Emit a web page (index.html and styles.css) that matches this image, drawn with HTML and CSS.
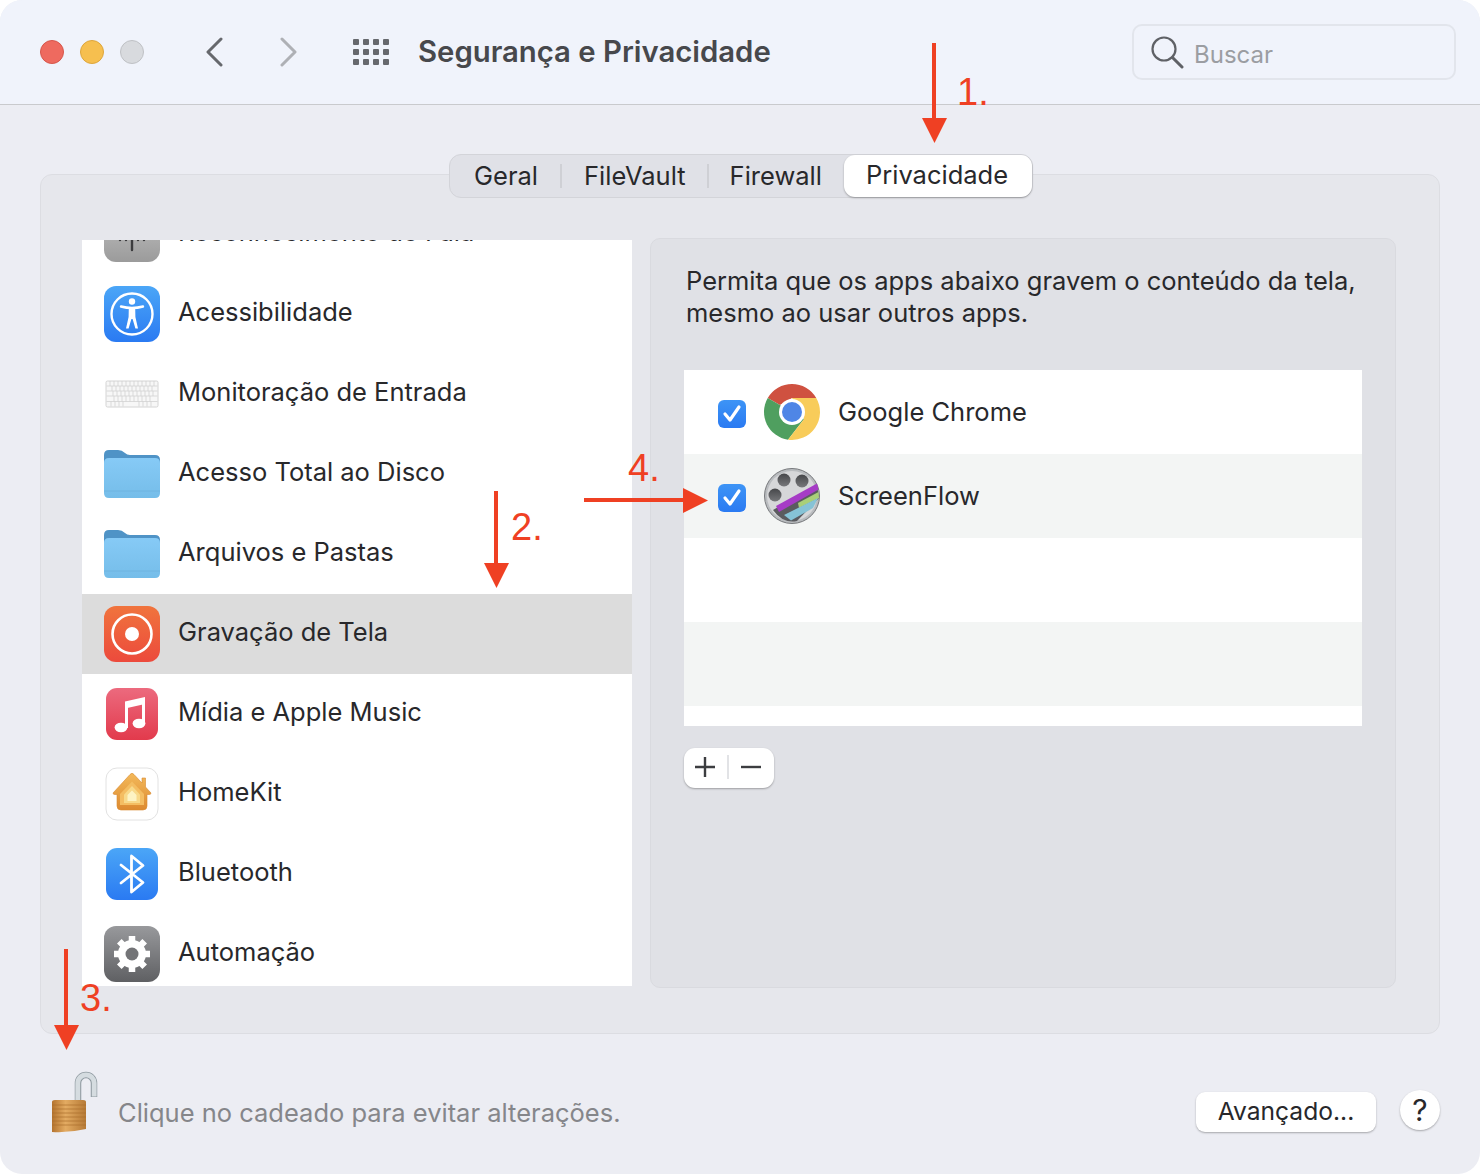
FILE: index.html
```html
<!DOCTYPE html>
<html lang="pt-br">
	<head>
		<meta http-equiv="Content-Type" content="text/html; charset=utf-8" />
		<title>Segurança e Privacidade</title>
		<link rel="stylesheet" href="styles.css">
	</head>

	<body>
		<svg class="defs" width="0" height="0">
			<defs>
				<linearGradient id="gBlue" x1="0" y1="0" x2="0" y2="1"><stop offset="0" stop-color="#4ba6f7"/><stop offset="1" stop-color="#2a7af2"/></linearGradient>
				<linearGradient id="gOrange" x1="0" y1="0" x2="0" y2="1"><stop offset="0" stop-color="#f0743d"/><stop offset="1" stop-color="#ec4a3c"/></linearGradient>
				<linearGradient id="gPink" x1="0" y1="0" x2="0" y2="1"><stop offset="0" stop-color="#ec6a7e"/><stop offset="1" stop-color="#e23a4c"/></linearGradient>
				<linearGradient id="gGray" x1="0" y1="0" x2="0" y2="1"><stop offset="0" stop-color="#98999c"/><stop offset="1" stop-color="#5f6063"/></linearGradient>
				<linearGradient id="gMic" x1="0" y1="0" x2="0" y2="1"><stop offset="0" stop-color="#c4c4c4"/><stop offset="1" stop-color="#9b9b9b"/></linearGradient>
				<linearGradient id="gFolder" x1="0" y1="0" x2="0" y2="1"><stop offset="0" stop-color="#86caf6"/><stop offset="1" stop-color="#75bde9"/></linearGradient>
				<linearGradient id="gHouse" x1="0" y1="0" x2="0" y2="1"><stop offset="0" stop-color="#f3b95a"/><stop offset="1" stop-color="#dd8a30"/></linearGradient>
				<linearGradient id="gBrass" x1="0" y1="0" x2="1" y2="0"><stop offset="0" stop-color="#b4742f"/><stop offset=".4" stop-color="#e3ab62"/><stop offset="1" stop-color="#b67a36"/></linearGradient>
				<linearGradient id="gReel" x1="0" y1="0" x2="0" y2="1"><stop offset="0" stop-color="#46474a"/><stop offset="1" stop-color="#77787b"/></linearGradient>
				<symbol id="folder" viewBox="0 0 56 48">
					<path d="M0 5q0-5 5-5h9q4 0 7 3q2 2 5 2h25q5 0 5 5v32H0z" fill="#4f93c6"/>
					<path d="M0 13q0-5 5-5h46q5 0 5 5v30q0 5-5 5H5q-5 0-5-5z" fill="url(#gFolder)"/>
					<path d="M0 41h56" stroke="#6fb4e0" stroke-width="1" fill="none"/>
				</symbol>
			</defs>
		</svg>

		<div class="window">
			<header class="toolbar">
				<div class="lights">
					<span class="light light-red"></span>
					<span class="light light-yellow"></span>
					<span class="light light-gray"></span>
				</div>
				<div class="nav">
					<svg class="chev" width="18" height="30" viewBox="0 0 18 30"><path d="M16 2L3 15l13 13" fill="none" stroke="#66686d" stroke-width="3" stroke-linecap="round" stroke-linejoin="round"/></svg>
					<svg class="chev" width="18" height="30" viewBox="0 0 18 30"><path d="M2 2l13 13L2 28" fill="none" stroke="#aeb0b5" stroke-width="3" stroke-linecap="round" stroke-linejoin="round"/></svg>
				</div>
				<div class="apps">
					<i></i><i></i><i></i><i></i><i></i><i></i><i></i><i></i><i></i><i></i><i></i><i></i>
				</div>
				<h1 class="title">Segurança e Privacidade</h1>
				<div class="search">
					<svg width="34" height="34" viewBox="0 0 34 34"><circle cx="14" cy="14" r="11.5" fill="none" stroke="#5f6166" stroke-width="2.2"/><path d="M22.5 22.5L32 32" stroke="#5f6166" stroke-width="3" stroke-linecap="round"/></svg>
					<span>Buscar</span>
				</div>
			</header>

			<nav class="tabs">
				<span class="tab">Geral</span>
				<span class="tab-sep"></span>
				<span class="tab">FileVault</span>
				<span class="tab-sep tab-sep-2"></span>
				<span class="tab">Firewall</span>
				<span class="tab tab-on">Privacidade</span>
			</nav>

			<section class="pane">
				<ul class="list">
					<li class="row">
						<svg class="ico" viewBox="0 0 56 56"><rect width="56" height="56" rx="12" fill="url(#gMic)"/><path d="M16 24v10M22 22v12M28 20v24M34 24v10M40 22v12" stroke="#3c3c3e" stroke-width="2.4" stroke-linecap="round"/></svg>
						<span>Reconhecimento de Fala</span>
					</li>
					<li class="row">
						<svg class="ico" viewBox="0 0 56 56"><rect width="56" height="56" rx="12" fill="url(#gBlue)"/><circle cx="28" cy="28" r="20.500" fill="none" stroke="#fff" stroke-width="2.400"/><circle cx="28" cy="15.500" r="3.200" fill="#fff"/><path d="M17 20.500Q28 23.500 39 20.500" fill="none" stroke="#fff" stroke-width="2.400" stroke-linecap="round"/><path d="M24.800 22h6.400l.2 9 2.600 11.500h-2.600L28.600 33h-1.200l-2.800 9.500H22l2.600-11.500z" fill="#fff"/></svg>
						<span>Acessibilidade</span>
					</li>
					<li class="row">
						<svg class="ico" viewBox="0 0 56 56">
							<rect x="2" y="15" width="52" height="26" rx="1.500" fill="#f7f7f7" stroke="#d4d4d4"/>
							<path d="M2.500 20h51M2.500 25h51M2.500 30h51M2.500 35.500h51" stroke="#d2d2d2" stroke-width=".8"/>
							<path d="M6 15v5M10 15v5M14 15v5M18 15v5M22 15v5M26 15v5M30 15v5M34 15v5M38 15v5M42 15v5M46 15v5M50 15v5M8 20v5M12 20v5M16 20v5M20 20v5M24 20v5M28 20v5M32 20v5M36 20v5M40 20v5M44 20v5M48 20v5M9 25v5M13 25v5M17 25v5M21 25v5M25 25v5M29 25v5M33 25v5M37 25v5M41 25v5M45 25v5M49 25v5M10 30v5.500M14 30v5.500M18 30v5.500M22 30v5.500M26 30v5.500M30 30v5.500M34 30v5.500M38 30v5.500M42 30v5.500M46 30v5.500M7 35.500v5M11 35.500v5M15 35.500v5M19 35.500v5M35 35.500v5M39 35.500v5M43 35.500v5M47 35.500v5" stroke="#d2d2d2" stroke-width=".8"/>
						</svg>
						<span>Monitoração de Entrada</span>
					</li>
					<li class="row">
						<svg class="ico ico-folder" viewBox="0 0 56 48"><use href="#folder"/></svg>
						<span>Acesso Total ao Disco</span>
					</li>
					<li class="row">
						<svg class="ico ico-folder" viewBox="0 0 56 48"><use href="#folder"/></svg>
						<span>Arquivos e Pastas</span>
					</li>
					<li class="row row-on">
						<svg class="ico" viewBox="0 0 56 56"><rect width="56" height="56" rx="12" fill="url(#gOrange)"/><circle cx="28" cy="28" r="19.500" fill="none" stroke="#fff" stroke-width="2.600"/><circle cx="28" cy="28" r="7" fill="#fff"/></svg>
						<span>Gravação de Tela</span>
					</li>
					<li class="row">
						<svg class="ico" viewBox="0 0 56 56"><rect x="2" y="2" width="52" height="52" rx="11" fill="url(#gPink)"/><path d="M21 15.500L41 11v7L21 22.500z" fill="#fff"/><path d="M22.500 16v26M39.500 12v26" fill="none" stroke="#fff" stroke-width="3"/><ellipse cx="17" cy="41.500" rx="6.400" ry="4.800" fill="#fff"/><ellipse cx="35" cy="37.500" rx="6.400" ry="4.800" fill="#fff"/></svg>
						<span>Mídia e Apple Music</span>
					</li>
					<li class="row">
						<svg class="ico" viewBox="0 0 56 56"><rect x="2" y="2" width="52" height="52" rx="11" fill="#fff" stroke="#e2e2e2"/><path d="M9 27L26 8.500q2-2.500 4 0L38 17v-5h3.500v9L47 27q0 1.500-2 1.500h-2V40q0 4-4 4H17q-4 0-4-4V28.500h-2q-2 0-2-1.500z" fill="url(#gHouse)" stroke="#d88a30" stroke-width=".6"/><path d="M16 28L28 15.500 40 28v11H16z" fill="#f4bd62"/><path d="M20 28.500L28 20l8 8.500V37H20z" fill="#f8d98a"/><path d="M23.500 29L28 24.500l4.500 4.500v6h-9z" fill="#fdf3c4"/></svg>
						<span>HomeKit</span>
					</li>
					<li class="row">
						<svg class="ico" viewBox="0 0 56 56"><rect x="2" y="2" width="52" height="52" rx="11" fill="url(#gBlue)"/><path d="M17 19L39 36.500 27.500 46V10L39 19.500 17 37" fill="none" stroke="#fff" stroke-width="2.800" stroke-linejoin="round" stroke-linecap="round"/></svg>
						<span>Bluetooth</span>
					</li>
					<li class="row">
						<svg class="ico" viewBox="0 0 56 56"><rect width="56" height="56" rx="12" fill="url(#gGray)"/><circle cx="28" cy="28" r="10" fill="none" stroke="#fff" stroke-width="8"/><path d="M28 10v36M10 28h36M15.300 15.300l25.400 25.400M40.700 15.300L15.300 40.700" stroke="#fff" stroke-width="6.500"/><circle cx="28" cy="28" r="6.500" fill="#737477"/></svg>
						<span>Automação</span>
					</li>
				</ul>

				<div class="detail">
					<p class="detail-text">Permita que os apps abaixo gravem o conteúdo da tela, mesmo ao usar outros apps.</p>
					<div class="apps-table">
						<div class="app-row">
							<span class="check"><svg width="22" height="20" viewBox="0 0 22 20"><path d="M4 10l5 6 9-13" fill="none" stroke="#fff" stroke-width="3.200" stroke-linecap="round" stroke-linejoin="round"/></svg></span>
							<svg class="app-ico" viewBox="0 0 56 56">
								<path d="M28 0A28 28 0 0 1 52.250 14H28L15.900 21 3.750 14A28 28 0 0 1 28 0z" fill="#cf5140"/>
								<path d="M3.750 14A28 28 0 0 0 24 55.700L40.100 35 15.900 21z" fill="#4f9f5f"/>
								<path d="M52.250 14A28 28 0 0 1 24 55.700L40.100 35 28 14z" fill="#f8cc5a"/>
								<circle cx="28" cy="28" r="13" fill="#fff"/>
								<circle cx="28" cy="28" r="10" fill="#4f86e6"/>
							</svg>
							<span>Google Chrome</span>
						</div>
						<div class="app-row app-row-alt">
							<span class="check"><svg width="22" height="20" viewBox="0 0 22 20"><path d="M4 10l5 6 9-13" fill="none" stroke="#fff" stroke-width="3.200" stroke-linecap="round" stroke-linejoin="round"/></svg></span>
							<svg class="app-ico" viewBox="0 0 56 56">
								<circle cx="28" cy="28" r="27.500" fill="#b9bcbf" stroke="#77797c" stroke-width="1"/>
								<circle cx="28" cy="28" r="25" fill="#d6d7d9"/>
								<circle cx="20" cy="12" r="6.500" fill="url(#gReel)"/>
								<circle cx="38" cy="13" r="6.500" fill="url(#gReel)"/>
								<circle cx="11" cy="27" r="6.500" fill="url(#gReel)"/>
								<path d="M9 42L53 17l2 13-22 23q-14 3-24-11z" fill="#5a5b5f"/>
								<path d="M12 38L53 15.500l1.500 6L15 44z" fill="#a63bc6"/>
								<path d="M34 35l20.500-11 .5 6-20 10z" fill="#a9cf78"/>
								<path d="M20 47l34-17-5 10-22 12.500z" fill="#86c3d6"/>
							</svg>
							<span>ScreenFlow</span>
						</div>
						<div class="app-row"></div>
						<div class="app-row app-row-alt"></div>
					</div>
					<div class="plus-minus">
						<svg width="24" height="24" viewBox="0 0 24 24"><path d="M12 2v20M2 12h20" stroke="#3c3d40" stroke-width="2.400"/></svg>
						<span class="pm-sep"></span>
						<svg width="24" height="24" viewBox="0 0 24 24"><path d="M2 12h20" stroke="#3c3d40" stroke-width="2.400"/></svg>
					</div>
				</div>
			</section>

			<footer class="bottom">
				<svg class="lock" width="48" height="62" viewBox="0 0 48 62">
					<path d="M28 30V12A8 8 0 0 1 44 12V26" fill="none" stroke="#8f9aa0" stroke-width="6.500"/>
					<path d="M27.800 30V12A8.200 8.200 0 0 1 44.200 12V25.500" fill="none" stroke="#d5dce0" stroke-width="4.800"/>
					<path d="M2 31q0-2 3-2h28q3 0 3 2v27q-17 4-34 3z" fill="url(#gBrass)"/>
					<path d="M2 34h34M2 38h34M2 42h34M2 46h34M2 50h34M2 54h34" stroke="#a96d2b" stroke-width="1" opacity=".65"/>
				</svg>
				<span class="lock-text">Clique no cadeado para evitar alterações.</span>
				<button class="btn">Avançado...</button>
				<button class="help">?</button>
			</footer>

			<svg class="marks" width="1480" height="1174" viewBox="0 0 1480 1174">
				<g fill="#ef4023" stroke="none">
					<rect x="932" y="43" width="4" height="76"/><path d="M922 118h25l-12.500 25z"/>
					<rect x="494" y="491" width="4" height="74"/><path d="M484 563h25l-12.500 25z"/>
					<rect x="64" y="949" width="4" height="78"/><path d="M54 1025h25l-12.500 25z"/>
					<rect x="584" y="498" width="100" height="4"/><path d="M683 488v25l25-12.500z"/>
				</g>
			</svg>
			<span class="note note-1">1.</span>
			<span class="note note-2">2.</span>
			<span class="note note-3">3.</span>
			<span class="note note-4">4.</span>
		</div>
	</body>
</html>
```

FILE: styles.css
```css
body,ul,li,h1,p{
	padding:0;
	margin:0;
}
li{
	list-style: none;
}
body{
	width: 1480px;
	height: 1174px;
	overflow: hidden;
	background: #fff;
	font-family: "Inter", "Noto Sans", sans-serif;
	color: #28282b;
}
.defs{
	position: absolute;
}
.window{
	position: relative;
	width: 1480px;
	height: 1174px;
	background: #ecedf3;
	border-radius: 22px;
	overflow: hidden;
}

/* toolbar */
.toolbar{
	height: 105px;
	box-sizing: border-box;
	background: #f0f3fb;
	border-bottom: 1px solid #c9cacd;
	display: flex;
	align-items: center;
	padding: 0 24px 1px 40px;
}
.lights{
	display: flex;
	gap: 16px;
}
.light{
	width: 24px;
	height: 24px;
	box-sizing: border-box;
	border-radius: 50%;
	border: 1px solid;
}
.light-red{
	background: #ee6a5f;
	border-color: #d6564b;
}
.light-yellow{
	background: #f6bf4f;
	border-color: #dea63c;
}
.light-gray{
	background: #d8dade;
	border-color: #bfc1c5;
}
.nav{
	display: flex;
	gap: 57px;
	margin-left: 61px;
}
.apps{
	display: grid;
	grid-template-columns: repeat(4, 6px);
	grid-template-rows: repeat(3, 6px);
	gap: 4px 4px;
	margin-left: 55px;
}
.apps i{
	background: #66686d;
	border-radius: 1px;
}
.title{
	margin-left: 29px;
	font-size: 29.300px;
	font-weight: 600;
	color: #47484c;
	flex: 1;
}
.search{
	width: 324px;
	height: 56px;
	box-sizing: border-box;
	margin-top: 1px;
	border: 2px solid #e2e5ec;
	border-radius: 10px;
	display: flex;
	align-items: center;
	gap: 10px;
	padding-left: 16px;
	font-size: 24px;
	color: #9b9da2;
}
.search span{
	position: relative;
	top: 2px;
}

/* tabs */
.tabs{
	position: relative;
	z-index: 1;
	width: 584px;
	height: 44px;
	box-sizing: border-box;
	margin: 49px 0 -24px 449px;
	background: #e0e1e7;
	border: 1px solid #d3d4d9;
	border-radius: 12px;
	display: flex;
	align-items: center;
	font-size: 25.500px;
	padding-left: 24px;
}
.tab{
	position: relative;
	top: -1px;
}
.tab-sep{
	width: 2px;
	height: 24px;
	background: #cfd0d5;
	margin: 0 22px;
}
.tab-sep-2{
	margin: 0 21px;
}
.tab-on{
	top: 0;
	margin-left: auto;
	width: 188px;
	height: 42px;
	box-sizing: border-box;
	padding-right: 2px;
	line-height: 40px;
	text-align: center;
	background: #fff;
	border-radius: 11px;
	box-shadow: 0 1px 2px rgba(0,0,0,.3);
}

/* main pane */
.pane{
	margin: 0 40px;
	width: 1400px;
	height: 860px;
	box-sizing: border-box;
	background: #e6e7ec;
	border: 1px solid #dcdde2;
	border-radius: 12px;
	display: flex;
	align-items: flex-start;
	gap: 18px;
	padding: 63px 0 0 41px;
}
.list{
	width: 550px;
	height: 746px;
	margin-top: 2px;
	overflow: hidden;
	background: #fff;
	font-size: 25.500px;
}
.row{
	height: 80px;
	display: flex;
	align-items: center;
	gap: 18px;
	padding-left: 22px;
}
.row:first-child{
	margin-top: -46px;
}
.row span{
	position: relative;
	top: -3px;
}
.row-on{
	background: #dcdcdc;
}
.ico{
	width: 56px;
	height: 56px;
	flex: none;
}
.ico-folder{
	height: 48px;
}

.detail{
	width: 746px;
	height: 750px;
	box-sizing: border-box;
	background: #e0e1e6;
	border: 1px solid #d9dadf;
	border-radius: 10px;
	padding: 26px 33px 0 35px;
}
.detail-text{
	font-size: 25.500px;
	line-height: 32px;
	height: 105px;
}
.apps-table{
	width: 678px;
	height: 356px;
	margin-left: -2px;
	background: #fff;
	font-size: 25.500px;
}
.app-row{
	height: 84px;
	display: flex;
	align-items: center;
	padding-left: 34px;
}
.app-row span:last-child{
	margin-left: 18px;
	position: relative;
	top: -1px;
}
.app-row-alt{
	background: #f3f5f4;
}
.check{
	width: 28px;
	height: 28px;
	flex: none;
	border-radius: 6px;
	background: linear-gradient(#3d94f6, #2a7af2);
	display: flex;
	align-items: center;
	justify-content: center;
	margin-top: 4px;
}
.app-ico{
	width: 56px;
	height: 56px;
	margin-left: 18px;
	flex: none;
}
.plus-minus{
	width: 90px;
	height: 40px;
	box-sizing: border-box;
	padding: 0 2px 2px 0;
	margin: 22px 0 0 -2px;
	background: #fff;
	border-radius: 11px;
	box-shadow: 0 1px 2px rgba(0,0,0,.3);
	display: flex;
	align-items: center;
	justify-content: center;
	gap: 10px;
}
.pm-sep{
	width: 2px;
	height: 24px;
	background: #e2e3e6;
}

/* footer */
.bottom{
	height: 140px;
	position: relative;
	display: flex;
	align-items: center;
	padding: 0 40px 0 50px;
	font-size: 25.500px;
}
.lock{
	flex: none;
	margin-top: -5px;
}
.lock-text{
	margin-left: 20px;
	color: #85868a;
	flex: 1;
	position: relative;
	top: 8px;
}
.btn{
	width: 180px;
	height: 40px;
	border: none;
	background: #fff;
	border-radius: 9px;
	box-shadow: 0 1px 2px rgba(0,0,0,.3);
	font: inherit;
	font-size: 24.600px;
	color: #28282b;
	padding: 0 0 2px;
	margin-top: 16px;
}
.help{
	width: 40px;
	height: 40px;
	margin-left: 24px;
	margin-top: 12px;
	border: none;
	border-radius: 50%;
	background: #fff;
	box-shadow: 0 1px 2px rgba(0,0,0,.3);
	font: inherit;
	font-size: 30px;
	color: #28282b;
	padding: 0;
}

/* red annotations */
.marks{
	position: absolute;
	left: 0;
	top: 0;
	z-index: 5;
	pointer-events: none;
}
.note{
	position: absolute;
	z-index: 6;
	font-family: "Liberation Sans", sans-serif;
	font-size: 38px;
	line-height: 44px;
	color: #ef4023;
}
.note-1{ left: 957px; top: 70px; }
.note-2{ left: 511px; top: 505px; }
.note-3{ left: 80px; top: 976px; }
.note-4{ left: 628px; top: 446px; }
```
